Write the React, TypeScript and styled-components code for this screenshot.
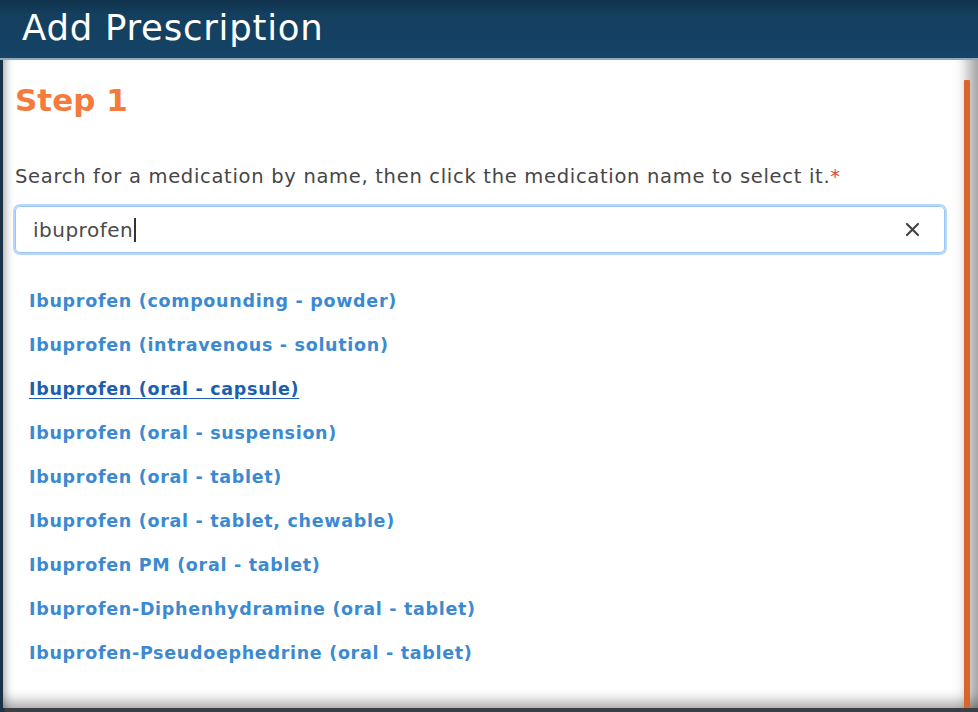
import { FC, useState } from 'react'
import styled, { createGlobalStyle } from 'styled-components'

const GlobalStyle = createGlobalStyle`
  html, body {
    margin: 0;
    padding: 0;
    background: #1c2b38;
    font-family: "DejaVu Sans", Verdana, sans-serif;
  }
`

const medications: string[] = [
  'Ibuprofen (compounding - powder)',
  'Ibuprofen (intravenous - solution)',
  'Ibuprofen (oral - capsule)',
  'Ibuprofen (oral - suspension)',
  'Ibuprofen (oral - tablet)',
  'Ibuprofen (oral - tablet, chewable)',
  'Ibuprofen PM (oral - tablet)',
  'Ibuprofen-Diphenhydramine (oral - tablet)',
  'Ibuprofen-Pseudoephedrine (oral - tablet)',
]

const App: FC = () => {
  const [query, setQuery] = useState<string>('ibuprofen')
  const hovered = 2

  return (
    <Frame>
      <GlobalStyle />
      <Header>
        <Title>Add Prescription</Title>
      </Header>
      <Panel>
        <Content>
          <Step>Step 1</Step>
          <Prompt>
            Search for a medication by name, then click the medication name to select it.
            <Required>*</Required>
          </Prompt>
          <SearchBox>
            <SearchText>{query}</SearchText>
            <Caret />
            <Clear aria-label="clear" onClick={() => setQuery('')}>
              <svg width="15" height="15" viewBox="0 0 15 15">
                <path d="M2 2 L13 13 M13 2 L2 13" stroke="#444" strokeWidth="2.2" strokeLinecap="round" />
              </svg>
            </Clear>
          </SearchBox>
          <Results>
            {medications.map((m, i) => (
              <ResultLink key={m} href="#" $active={i === hovered}>
                {m}
              </ResultLink>
            ))}
          </Results>
        </Content>
        <Track>
          <Thumb />
        </Track>
      </Panel>
    </Frame>
  )
}

const Frame = styled.div`
  width: 978px;
  height: 712px;
  display: flex;
  flex-direction: column;
  overflow: hidden;
  background: linear-gradient(90deg, #1b3145 0, #1b3145 4px, #3a3f44 5px);
`

const Header = styled.div`
  height: 60px;
  flex-shrink: 0;
  background: linear-gradient(#10324c 0px, #143f5f 14px, #154466 100%);
  border-bottom: 2px solid #8fa9bf;
  display: flex;
  align-items: center;
  padding-left: 22px;
  box-sizing: border-box;
`

const Title = styled.h1`
  margin: 0;
  margin-top: -4px;
  color: #fff;
  font-weight: 400;
  font-size: 35.5px;
  letter-spacing: 0.75px;
`

const Panel = styled.div`
  flex: 1;
  display: flex;
  margin: 0 0 4px 3px;
  background: #fff;
  box-shadow:
    inset 10px 0 10px -8px rgba(0, 0, 0, 0.35),
    inset -22px 0 14px -12px rgba(0, 0, 0, 0.35),
    inset 0 -16px 14px -10px rgba(0, 0, 0, 0.35);
`

const Content = styled.div`
  flex: 1;
  padding: 0 0 0 12px;
`

const Step = styled.h2`
  margin: 18px 0 0;
  color: #f57b3b;
  font-size: 31px;
  font-weight: 700;
  line-height: 44px;
`

const Prompt = styled.p`
  margin: 42px 0 0;
  color: #464646;
  font-size: 19.5px;
  line-height: 26px;
  letter-spacing: 0.7px;
`

const Required = styled.span`
  color: #e0453f;
`

const SearchBox = styled.div`
  margin-top: 16px;
  width: 930px;
  height: 47px;
  box-sizing: border-box;
  border: 1px solid #9cc6f2;
  border-radius: 5px;
  box-shadow: 0 0 0 2px #b6d6fb;
  display: flex;
  align-items: center;
`

const SearchText = styled.span`
  padding: 0 0 0 17px;
  font-size: 20px;
  letter-spacing: 0.5px;
  color: #4a4a4a;
`

const Caret = styled.span`
  width: 1.5px;
  height: 24px;
  margin-left: 1px;
  background: #333;
`

const Clear = styled.button`
  margin-left: auto;
  margin-right: 24px;
  border: none;
  background: none;
  padding: 0;
  display: flex;
  cursor: pointer;
`

const Results = styled.div`
  margin-top: 35px;
  padding-left: 14px;
  display: flex;
  flex-direction: column;
  gap: 18px;
`

const ResultLink = styled.a<{ $active: boolean }>`
  font-size: 17.5px;
  line-height: 26px;
  font-weight: 700;
  letter-spacing: 0.7px;
  color: ${(p) => (p.$active ? '#1d5fae' : '#3b8ad1')};
  text-decoration: ${(p) => (p.$active ? 'underline' : 'none')};
  text-underline-offset: 3px;
  align-self: flex-start;
`

const Track = styled.div`
  width: 6px;
  margin: 20px 8px 0 0;
  display: flex;
`

const Thumb = styled.div`
  flex: 1;
  background: #d9652c;
  border-radius: 1px;
`

export default App
